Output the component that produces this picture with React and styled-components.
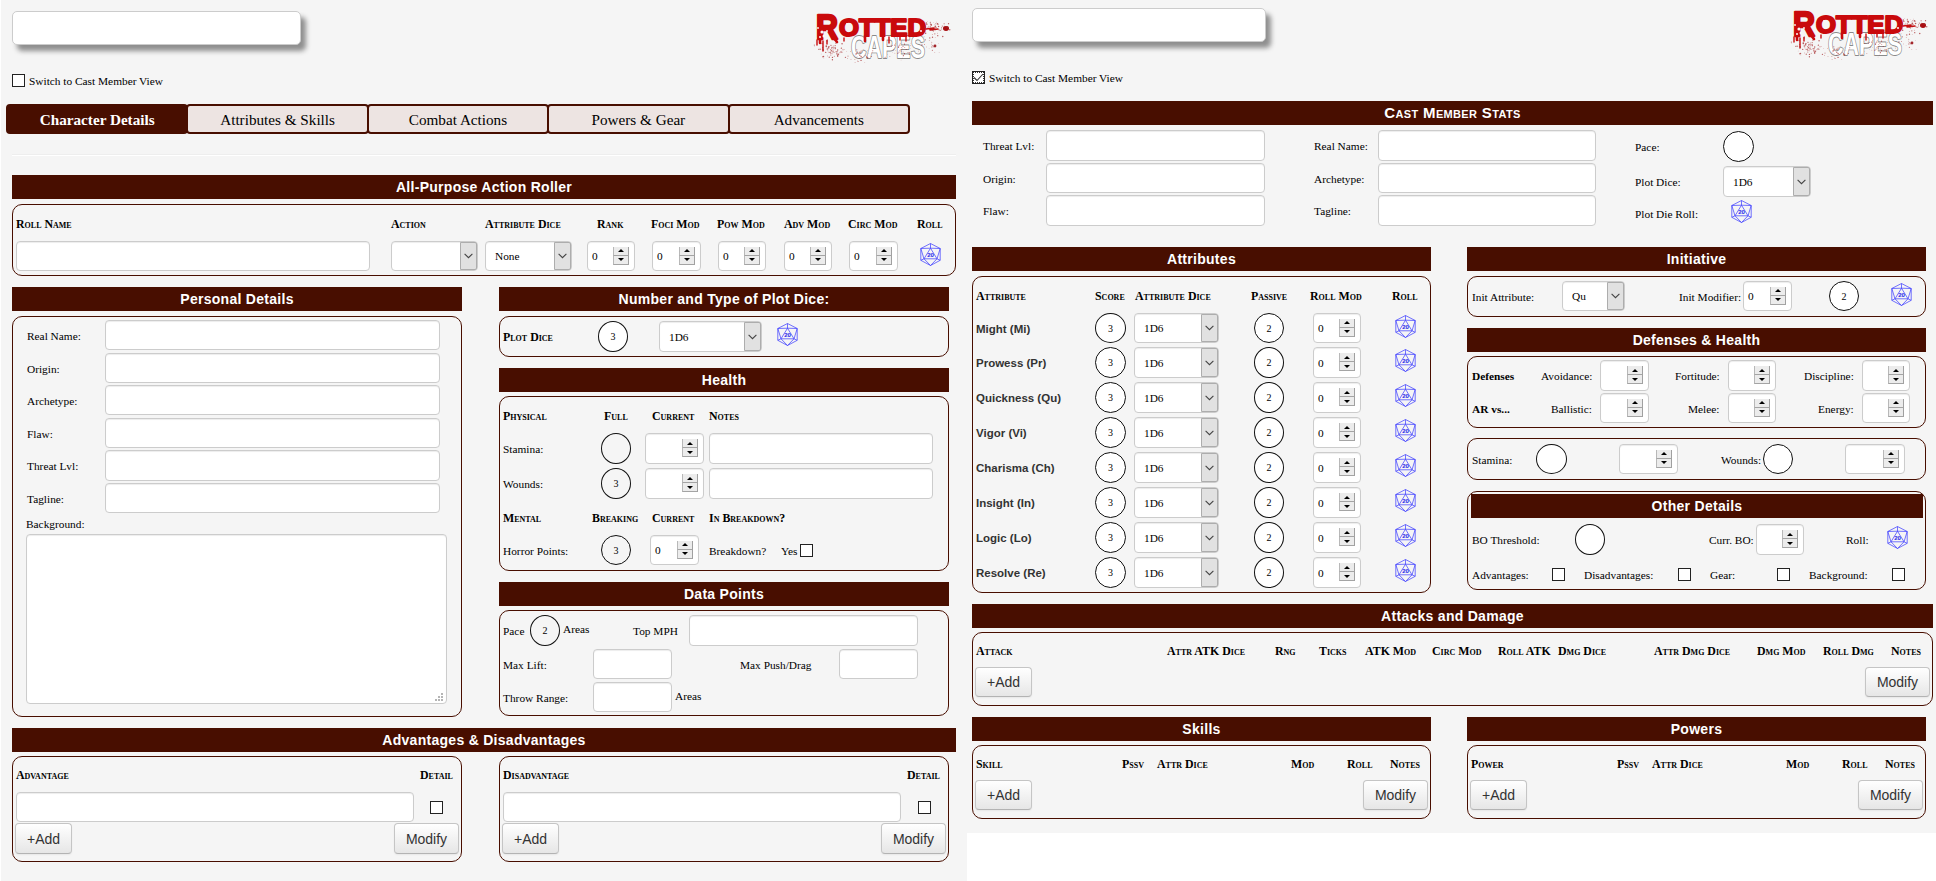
import React from "react";
import styled, { createGlobalStyle, css } from "styled-components";

const MAROON = "#480e00";

const GlobalStyle = createGlobalStyle`
  *, *::before, *::after { box-sizing: border-box; }
  body { margin: 0; background: #fff; color: #000; font: 11.35px "Liberation Serif", "Times New Roman", serif; }
`;

const Sheets = styled.div`
  display: flex;
  align-items: flex-start;
  width: 1936px;
  height: 881px;
  padding-left: 1px;
  overflow: hidden;
`;

const Sheet = styled.main`
  flex: none;
  width: ${(p) => p.$w}px;
  height: ${(p) => p.$h}px;
  padding: ${(p) => p.$pad};
  background: #f5f5f5;
`;

const Header = styled.header`
  display: flex;
  justify-content: space-between;
  align-items: flex-start;
  height: 63px;
  padding-right: 5px;
`;

const NameInput = styled.div`
  width: ${(p) => p.$w}px;
  height: 34px;
  border: 1px solid #ccc;
  border-radius: 5px;
  background: #fff;
  box-shadow: 5px 6px 5px #8f8f8f;
`;

const ViewSwitch = styled.div`
  display: flex;
  align-items: center;
  gap: 4px;
  height: 13px;
`;

const Tabs = styled.nav`
  display: flex;
  margin: 17px 0 0 -6px;
`;

const Tab = styled.div`
  flex: none;
  width: 182.4px;
  height: 30px;
  margin-right: -2px;
  border: 2px solid ${MAROON};
  border-radius: 4px;
  background: ${(p) => (p.$active ? MAROON : "#ede4e2")};
  color: ${(p) => (p.$active ? "#fff" : "#000")};
  font-size: 15.2px;
  font-weight: ${(p) => (p.$active ? 700 : 400)};
  line-height: 27px;
  text-align: center;
`;

const Rule = styled.hr`
  height: 2px;
  margin: 20px 0;
  border: 0;
  border-top: 1px solid #eee;
  border-bottom: 1px solid #fff;
`;

const Title = styled.h2`
  width: ${(p) => (p.$w ? `${p.$w}px` : "auto")};
  height: 24px;
  margin: ${(p) => p.$mt || 0}px 0 0 ${(p) => p.$ml || 0}px;
  background: ${MAROON};
  color: #fff;
  font: bold 14px/24px "Liberation Sans", Arial, sans-serif;
  letter-spacing: 0.28px;
  text-align: center;
  ${(p) => p.$caps && css`
    font-size: 15px;
    font-variant: small-caps;
    letter-spacing: 0.35px;
  `}
`;

const Panel = styled.section`
  height: ${(p) => p.$h}px;
  margin-top: ${(p) => p.$mt ?? 5}px;
  border: 1px solid ${MAROON};
  border-radius: 10px;
`;

const Columns = styled.div`
  display: flex;
  gap: ${(p) => p.$gap}px;
  margin-top: ${(p) => p.$mt}px;
`;

const Column = styled.div`
  flex: none;
  width: ${(p) => p.$w}px;
`;

/* Column starts are measured from the outer edge of the surrounding panel. */
const tracks = (stops) =>
  stops.slice(1).map((s, i) => `${s - stops[i]}px`).concat("max-content").join(" ");

const Row = styled.div`
  display: grid;
  grid-template-columns: ${(p) => tracks(p.$at)};
  align-items: center;
  height: ${(p) => p.$h || 30}px;
  margin-top: ${(p) => p.$mt || 0}px;
  padding-left: ${(p) => p.$at[0] - (p.$open ? 0 : 1)}px;
  white-space: nowrap;
`;

const Heading = styled.span`
  padding-top: 2px;
  font-size: 11.9px;
  font-weight: 700;
  font-variant: small-caps;
`;

const Label = styled.span`
  padding-top: 1px;
  font-weight: ${(p) => (p.$bold ? 700 : 400)};
`;

const Raised = styled.span`
  padding-bottom: 3px;
`;

const AttributeName = styled.span`
  padding-top: 1px;
  color: #333;
  font: bold 11.5px "Liberation Sans", Arial, sans-serif;
`;

const field = css`
  border: 1px solid #ccc;
  border-radius: 4px;
  background: #fff;
  box-shadow: inset 0 1px 1px rgba(0, 0, 0, 0.075);
`;

const Input = styled.div`
  ${field}
  width: ${(p) => p.$w}px;
  height: 100%;
`;

const TextArea = styled.div`
  ${field}
  display: flex;
  justify-content: flex-end;
  align-items: flex-end;
  width: 421px;
  height: 170px;
  margin-left: 13px;
  padding: 0 3px 2px 0;
`;

const SelectBox = styled.div`
  ${field}
  display: flex;
  justify-content: space-between;
  align-items: center;
  width: ${(p) => p.$w}px;
  height: 100%;
  padding-left: 9px;
`;

const SelectButton = styled.span`
  display: grid;
  place-items: center;
  width: 17px;
  height: 100%;
  border: 1px solid #adadad;
  border-radius: 0 2px 2px 0;
  background: #e1e1e1;
`;

const SpinBox = styled.div`
  ${field}
  display: flex;
  justify-content: space-between;
  align-items: center;
  width: ${(p) => p.$w || 48}px;
  height: 100%;
  padding: 0 5px 0 4px;
`;

const SpinButtons = styled.span`
  display: grid;
  grid-template-rows: 9px 9px;
  width: 16px;
  margin-bottom: 1px;
`;

const SpinButton = styled.span`
  display: grid;
  place-items: center;
  border-style: solid;
  border-width: 0 1px 1.5px;
  border-color: #b2b2b2 #a0a0a0 #a4a4a4 #b8b8b8;
  background: #ececec;
`;

const Circle = styled.div`
  display: grid;
  place-items: center;
  width: ${(p) => p.$w || 30}px;
  height: 100%;
  border: 1px solid #111;
  border-radius: 50%;
  background: ${(p) => (p.$clear ? "transparent" : "#fff")};
  font-size: 10px;
`;

const Box = styled.span`
  display: grid;
  place-items: center;
  flex: none;
  width: 13px;
  height: 13px;
  border: 1px solid #222;
  background: #fff;
`;

const FocusedBox = styled(Box)`
  outline: 1px dotted #333;
  outline-offset: -2px;
`;

const Actions = styled.div`
  display: flex;
  justify-content: space-between;
  height: ${(p) => p.$h || 30}px;
  margin-top: ${(p) => p.$mt || 0}px;
  padding: 0 2px;
`;

const Button = styled.button`
  width: ${(p) => p.$w}px;
  height: 100%;
  padding: 0;
  border: 1px solid #c5c5c5;
  border-bottom-color: #b3b3b3;
  border-radius: 4px;
  background: linear-gradient(#fff, #e6e6e6);
  box-shadow: 0 1px 2px rgba(0, 0, 0, 0.06);
  color: #333;
  font: 14px "Liberation Sans", Arial, sans-serif;
`;

const Die = styled(DieIcon)`
  display: block;
  margin: -4px 0 0 -0.5px;
`;

function DieIcon({ className }) {
  return (
    <svg className={className} width="21" height="23" viewBox="0 0 21 23" fill="none" stroke="#4343ff" strokeWidth="0.75">
      <path d="M10.5 .5 20.2 5.5V17.3L10.5 22.5.8 17.3V5.5Z" />
      <path d="M10.5 5.2 17 15.8H4Z" />
      <path d="M10.5 .5V5.2M.8 5.5 10.5 5.2 20.2 5.5 17 15.8 20.2 17.3M.8 5.5 4 15.8 .8 17.3M4 15.8 10.5 22.5 17 15.8" />
      <text x="10.5" y="14.2" textAnchor="middle" fill="#2424e8" stroke="none" fontFamily="Liberation Sans, sans-serif" fontSize="6" fontWeight="700">20</text>
    </svg>
  );
}

const Triangle = ({ down }) => (
  <svg width="6" height="3" viewBox="0 0 6 3">
    <path d={down ? "M0 0H6L3 3Z" : "M0 3H6L3 0Z"} />
  </svg>
);

const Spin = ({ w, children }) => (
  <SpinBox $w={w}>
    <span>{children}</span>
    <SpinButtons>
      <SpinButton><Triangle /></SpinButton>
      <SpinButton><Triangle down /></SpinButton>
    </SpinButtons>
  </SpinBox>
);

const Select = ({ w, children }) => (
  <SelectBox $w={w}>
    <span>{children}</span>
    <SelectButton>
      <svg width="9" height="6" viewBox="0 0 9 6" fill="none" stroke="#444" strokeWidth="1.1">
        <path d="M.6 .8 4.5 4.7 8.4 .8" />
      </svg>
    </SelectButton>
  </SelectBox>
);

const SPLATTER = (() => {
  let seed = 11;
  const next = () => (seed = (seed * 16807) % 2147483647) / 2147483647;
  const spray = (n, x, y, w, h, max) =>
    Array.from({ length: n }, () => {
      const u = (next() + next()) / 2;
      const v = (next() + next()) / 2;
      return [x + u * w, y + v * h, 0.2 + next() * max];
    });
  return [
    ...spray(80, 0, 29, 36, 20, 0.6),
    ...spray(35, 30, 36, 30, 18, 0.5),
    ...spray(45, 66, 28, 40, 23, 0.45),
    ...spray(55, 108, 8, 28, 18, 0.7),
    ...spray(22, 106, 22, 22, 22, 0.5),
  ];
})();

const LogoArt = styled.svg`
  flex: none;
  overflow: visible;
  font-family: "Liberation Sans", Arial, sans-serif;
  font-weight: 700;
`;

const LowerWord = styled.text`
  fill: #fff;
  stroke: #8a8a8a;
  stroke-width: 1.8px;
  stroke-linejoin: round;
  paint-order: stroke;
`;

const Logo = () => (
  <LogoArt width="137" height="54" viewBox="0 0 137 54">
    <LowerWord x="37" y="47" fontSize="32" textLength="74" lengthAdjust="spacingAndGlyphs">CAPES</LowerWord>
    <g fill="#c90a0c" stroke="#c90a0c" strokeLinejoin="round">
      <text x="2" y="27.5" fontSize="35" textLength="22" lengthAdjust="spacingAndGlyphs" strokeWidth="2.4">R</text>
      <text x="25" y="25" fontSize="24" textLength="87" lengthAdjust="spacingAndGlyphs" strokeWidth="2">OTTED</text>
    </g>
    <g stroke="#c90a0c" strokeLinecap="round">
      <path strokeWidth="2.6" d="M6 27V32M18 25 23 31M51 25V30M69 25V29" />
      <path strokeWidth="1.4" d="M9 30V40M13 29V33M3 29V34M86 26V29M92 26V30M30 27V30M75 26V32" />
      <path strokeWidth="1.4" d="M112 18 120 17M116 19 124 18" />
    </g>
    <ellipse cx="132" cy="17.5" rx="3" ry="2.4" fill="#a80d10" />
    <circle cx="121" cy="35" r="1.4" fill="#a3262b" />
    <g fill="#f8f8f8">
      <circle cx="8" cy="21" r="1.6" /><circle cx="10" cy="25" r="1.5" /><circle cx="6" cy="26" r="1" />
      <circle cx="4" cy="17" r=".9" /><circle cx="13" cy="20" r=".9" /><circle cx="12" cy="28" r=".9" />
      <circle cx="33" cy="13" r="1" /><circle cx="37" cy="18" r=".8" /><circle cx="107" cy="20" r="1" />
    </g>
    <g fill="#a5292b" opacity="0.75">
      {SPLATTER.map(([x, y, r], i) => <circle key={i} cx={x} cy={y} r={r} />)}
    </g>
  </LogoArt>
);

const Grip = () => (
  <svg width="8" height="8" viewBox="0 0 8 8" fill="#b5b5b5">
    <path d="M6 0h2v2H6zM3 3h2v2H3zM6 3h2v2H6zM0 6h2v2H0zM3 6h2v2H3zM6 6h2v2H6z" />
  </svg>
);

const Heads = ({ at, h = 36, mt, names }) => (
  <Row $at={at} $h={h} $mt={mt}>
    {names.map((n) => <Heading key={n}>{n}</Heading>)}
  </Row>
);

const PERSONAL = [
  ["Real Name:", 3, 30], ["Origin:", 3, 30], ["Archetype:", 2, 30],
  ["Flaw:", 3, 30], ["Threat Lvl:", 2, 31], ["Tagline:", 2, 30],
];

const ATTRIBUTES = [
  "Might (Mi)", "Prowess (Pr)", "Quickness (Qu)", "Vigor (Vi)",
  "Charisma (Ch)", "Insight (In)", "Logic (Lo)", "Resolve (Re)",
];

const Traits = ({ kind, box }) => (
  <Column $w={450}>
    <Panel $mt={4} $h={106}>
      <Heads at={[4, 408]} h={35} names={[kind, "Detail"]} />
      <Row $at={[4, box]}><Input $w={398} /><Box /></Row>
      <Actions $mt={1} $h={31}><Button $w={57}>+Add</Button><Button $w={65}>Modify</Button></Actions>
    </Panel>
  </Column>
);

const Ratings = ({ name, first }) => (
  <Column $w={459}>
    <Title>{name}</Title>
    <Panel $mt={4} $h={74}>
      <Heads at={[4, 150, 185, 319, 375, 418]} h={34} names={[first, "Pssv", "Attr Dice", "Mod", "Roll", "Notes"]} />
      <Actions><Button $w={57}>+Add</Button><Button $w={65}>Modify</Button></Actions>
    </Panel>
  </Column>
);

const CharacterSheet = () => (
  <Sheet $w={966} $h={881} $pad="11px 11px 0">
    <Header><NameInput $w={289} /><Logo /></Header>
    <ViewSwitch><Box />Switch to Cast Member View</ViewSwitch>
    <Tabs>
      <Tab $active>Character Details</Tab>
      <Tab>Attributes &amp; Skills</Tab>
      <Tab>Combat Actions</Tab>
      <Tab>Powers &amp; Gear</Tab>
      <Tab>Advancements</Tab>
    </Tabs>
    <Rule />
    <Title $mt={-1}>All-Purpose Action Roller</Title>
    <Panel $h={72}>
      <Heads
        at={[4, 379, 473, 585, 639, 705, 772, 836, 905]}
        names={["Roll Name", "Action", "Attribute Dice", "Rank", "Foci Mod", "Pow Mod", "Adv Mod", "Circ Mod", "Roll"]}
      />
      <Row $at={[4, 379, 473, 575, 640, 706, 772, 837, 908]}>
        <Input $w={354} /><Select w={87} /><Select w={87}>None</Select>
        <Spin>0</Spin><Spin w={49}>0</Spin><Spin>0</Spin><Spin>0</Spin><Spin w={49}>0</Spin><Die />
      </Row>
    </Panel>
    <Columns $gap={37} $mt={11}>
      <Column $w={450}>
        <Title>Personal Details</Title>
        <Panel $h={401}>
          {PERSONAL.map(([name, mt, h]) => (
            <Row key={name} $at={[15, 93]} $mt={mt} $h={h}><Label>{name}</Label><Input $w={335} /></Row>
          ))}
          <Row $at={[14]} $h={21}><Label>Background:</Label></Row>
          <TextArea><Grip /></TextArea>
        </Panel>
      </Column>
      <Column $w={450}>
        <Title>Number and Type of Plot Dice:</Title>
        <Panel $h={41}>
          <Row $at={[4, 99, 160, 278]} $mt={4} $h={31}>
            <Heading>Plot Dice</Heading><Circle>3</Circle><Select w={103}>1D6</Select><Die />
          </Row>
        </Panel>
        <Title $mt={11}>Health</Title>
        <Panel $mt={4} $h={175}>
          <Heads at={[4, 105, 153, 210]} names={["Physical", "Full", "Current", "Notes"]} />
          <Row $at={[4, 102, 146, 210]} $h={31}><Label>Stamina:</Label><Circle $clear /><Spin w={59} /><Input $w={224} /></Row>
          <Row $at={[4, 102, 146, 210]} $h={31} $mt={4}><Label>Wounds:</Label><Circle $clear>3</Circle><Spin w={59} /><Input $w={224} /></Row>
          <Heads at={[4, 93, 153, 210]} names={["Mental", "Breaking", "Current", "In Breakdown?"]} />
          <Row $at={[4, 102, 151, 210, 282, 301]}>
            <Label>Horror Points:</Label><Circle $clear>3</Circle><Spin w={49}>0</Spin>
            <Label>Breakdown?</Label><Label>Yes</Label><Box />
          </Row>
        </Panel>
        <Title $mt={11}>Data Points</Title>
        <Panel $mt={4} $h={106}>
          <Row $at={[4, 31, 64, 134, 190]} $mt={4} $h={31}>
            <Label>Pace</Label><Circle $clear>2</Circle><Raised>Areas</Raised><Label>Top MPH</Label><Input $w={229} />
          </Row>
          <Row $at={[4, 94, 241, 340]} $mt={3}>
            <Label>Max Lift:</Label><Input $w={79} /><Label>Max Push/Drag</Label><Input $w={79} />
          </Row>
          <Row $at={[4, 94, 176]} $mt={3}><Label>Throw Range:</Label><Input $w={79} /><Raised>Areas</Raised></Row>
        </Panel>
      </Column>
    </Columns>
    <Title $mt={11}>Advantages &amp; Disadvantages</Title>
    <Columns $gap={37} $mt={0}>
      <Traits kind="Advantage" box={418} />
      <Traits kind="Disadvantage" box={419} />
    </Columns>
  </Sheet>
);

const CastSheet = () => (
  <Sheet $w={969} $h={833} $pad="8px 3px 0 5px">
    <Header><NameInput $w={294} /><Logo /></Header>
    <ViewSwitch>
      <FocusedBox>
        <svg width="11" height="9" viewBox="0 0 11 9" fill="none" stroke="#333" strokeWidth="1.1"><path d="M1 4.5 4 7.5 10 1" /></svg>
      </FocusedBox>
      Switch to Cast Member View
    </ViewSwitch>
    <Title $mt={17} $caps>Cast Member Stats</Title>
    <Columns $gap={0} $mt={5}>
      <Column $w={653}>
        <Row $open $at={[11, 74, 342, 406]} $h={31}><Label>Threat Lvl:</Label><Input $w={219} /><Label>Real Name:</Label><Input $w={218} /></Row>
        <Row $open $at={[11, 74, 342, 406]} $mt={2}><Label>Origin:</Label><Input $w={219} /><Label>Archetype:</Label><Input $w={218} /></Row>
        <Row $open $at={[11, 74, 342, 406]} $mt={2} $h={31}><Label>Flaw:</Label><Input $w={219} /><Label>Tagline:</Label><Input $w={218} /></Row>
      </Column>
      <Column $w={300}>
        <Row $open $at={[10, 98]} $h={31} $mt={1}><Label>Pace:</Label><Circle $w={31} /></Row>
        <Row $open $at={[10, 98]} $h={31} $mt={4}><Label>Plot Dice:</Label><Select w={88}>1D6</Select></Row>
        <Row $open $at={[10, 106]} $h={31} $mt={1}><Label>Plot Die Roll:</Label><Die /></Row>
      </Column>
    </Columns>
    <Columns $gap={36} $mt={18}>
      <Column $w={459}>
        <Title>Attributes</Title>
        <Panel $h={317}>
          <Heads at={[4, 123, 163, 279, 338, 420]} names={["Attribute", "Score", "Attribute Dice", "Passive", "Roll Mod", "Roll"]} />
          {ATTRIBUTES.map((name, i) => (
            <Row key={name} $at={[4, 123, 162, 282, 341, 423]} $mt={i ? 4 : 0} $h={i ? 31 : 30}>
              <AttributeName>{name}</AttributeName><Circle $w={31}>3</Circle><Select w={85}>1D6</Select>
              <Circle>2</Circle><Spin>0</Spin><Die />
            </Row>
          ))}
        </Panel>
      </Column>
      <Column $w={459}>
        <Title>Initiative</Title>
        <Panel $h={41}>
          <Row $at={[5, 95, 212, 276, 362, 424]} $mt={4}>
            <Label>Init Attribute:</Label><Select w={63}>Qu</Select><Label>Init Modifier:</Label><Spin w={49}>0</Spin><Circle>2</Circle><Die />
          </Row>
        </Panel>
        <Title $mt={11}>Defenses &amp; Health</Title>
        <Panel $mt={4} $h={72}>
          <Row $at={[5, 74, 133, 208, 261, 337, 395]} $mt={3} $h={31}>
            <Label $bold>Defenses</Label><Label>Avoidance:</Label><Spin w={49} /><Label>Fortitude:</Label><Spin /><Label>Discipline:</Label><Spin />
          </Row>
          <Row $at={[5, 84, 133, 221, 261, 351, 395]} $mt={2}>
            <Label $bold>AR vs...</Label><Label>Ballistic:</Label><Spin w={49} /><Label>Melee:</Label><Spin /><Label>Energy:</Label><Spin />
          </Row>
        </Panel>
        <Panel $mt={10} $h={42}>
          <Row $at={[5, 69, 152, 254, 296, 378]} $mt={5}>
            <Label>Stamina:</Label><Circle $w={31} /><Spin w={59} /><Label>Wounds:</Label><Circle /><Spin w={60} />
          </Row>
        </Panel>
        <Panel $mt={11} $h={99}>
          <Title $mt={2} $ml={3} $w={452}>Other Details</Title>
          <Row $at={[5, 108, 242, 289, 379, 420]} $mt={6} $h={31}>
            <Label>BO Threshold:</Label><Circle /><Label>Curr. BO:</Label><Spin /><Label>Roll:</Label><Die />
          </Row>
          <Row $at={[5, 85, 117, 211, 243, 310, 342, 425]} $mt={12} $h={15}>
            <Label>Advantages:</Label><Box /><Label>Disadvantages:</Label><Box /><Label>Gear:</Label><Box /><Label>Background:</Label><Box />
          </Row>
        </Panel>
      </Column>
    </Columns>
    <Title $mt={11}>Attacks and Damage</Title>
    <Panel $mt={4} $h={74}>
      <Heads
        h={34}
        at={[4, 195, 303, 347, 393, 460, 526, 586, 682, 785, 851, 919]}
        names={["Attack", "Attr ATK Dice", "Rng", "Ticks", "ATK Mod", "Circ Mod", "Roll ATK", "Dmg Dice", "Attr Dmg Dice", "Dmg Mod", "Roll Dmg", "Notes"]}
      />
      <Actions><Button $w={57}>+Add</Button><Button $w={65}>Modify</Button></Actions>
    </Panel>
    <Columns $gap={36} $mt={11}>
      <Ratings name="Skills" first="Skill" />
      <Ratings name="Powers" first="Power" />
    </Columns>
  </Sheet>
);

export default function App() {
  return (
    <>
      <GlobalStyle />
      <Sheets>
        <CharacterSheet />
        <CastSheet />
      </Sheets>
    </>
  );
}
